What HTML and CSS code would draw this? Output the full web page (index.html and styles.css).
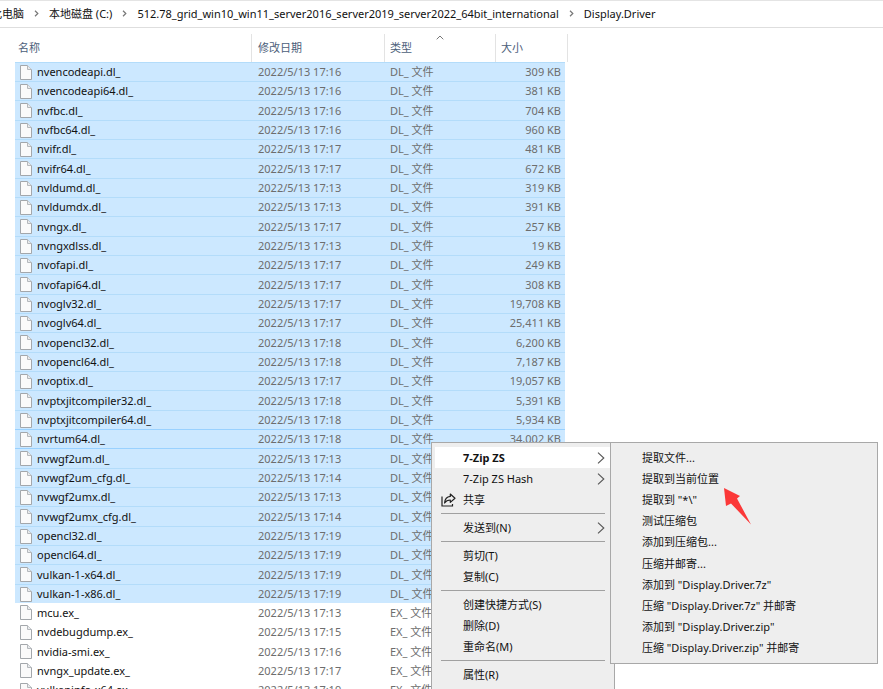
FILE: index.html
```html
<!DOCTYPE html>
<html lang="zh-CN">
<head>
<meta charset="utf-8">
<title>Display.Driver</title>
<link rel="stylesheet" href="styles.css">
</head>
<body>
<svg class="defs" aria-hidden="true">
  <symbol id="file" viewBox="0 0 12 15"><path d="M.5.5h7l4 4v10H.5z" fill="#fafafa" stroke="#a3a7ab"/><path d="M7.500.5v4h4" fill="#e9ebed" stroke="#b4b8bc"/></symbol>
  <symbol id="crumb" viewBox="0 0 5 7"><path d="M1 .8 3.800 3.500 1 6.200" fill="none" stroke="#777" stroke-width="1.200"/></symbol>
  <symbol id="more" viewBox="0 0 8 12"><path d="M1 .7 6.800 6 1 11.300" fill="none" stroke="#555" stroke-width="1.100"/></symbol>
</svg>
<div class="window">
  <nav class="address">
    <a href="#">此电脑</a>
    <svg class="crumb"><use href="#crumb"/></svg>
    <a href="#">本地磁盘 (C:)</a>
    <svg class="crumb"><use href="#crumb"/></svg>
    <a href="#">512.78_grid_win10_win11_server2016_server2019_server2022_64bit_international</a>
    <svg class="crumb"><use href="#crumb"/></svg>
    <a href="#">Display.Driver</a>
  </nav>
  <main class="list">
    <table>
      <colgroup><col class="c-name"><col class="c-date"><col class="c-type"><col class="c-size"><col class="c-end"></colgroup>
      <thead>
        <tr><th>名称</th><th>修改日期</th><th class="sorted">类型<svg class="caret" viewBox="0 0 8 5"><path d="M.7 4.300 4 1l3.300 3.300" fill="none" stroke="#777"/></svg></th><th colspan="2">大小</th></tr>
      </thead>
      <tbody id="files"></tbody>
    </table>
  </main>
</div>

<ul class="menu main-menu">
  <li class="open"><button type="button">7-Zip ZS</button><svg class="more"><use href="#more"/></svg></li>
  <li><button type="button">7-Zip ZS Hash</button><svg class="more"><use href="#more"/></svg></li>
  <li><svg class="share" viewBox="0 0 15 14"><path d="M1 3.500V13h10.500v-2" fill="none" stroke="#222" stroke-width="1.200"/><path d="M9.300 1 14 5.200 9.300 9.400V7C6.800 7 5 7.800 3.600 10 3.900 6.200 5.800 3.700 9.300 3.400z" fill="none" stroke="#222" stroke-width="1.200" stroke-linejoin="round"/></svg><button type="button">共享</button></li>
  <li class="rule"></li>
  <li><button type="button">发送到(N)</button><svg class="more"><use href="#more"/></svg></li>
  <li class="rule"></li>
  <li><button type="button">剪切(T)</button></li>
  <li><button type="button">复制(C)</button></li>
  <li class="rule"></li>
  <li><button type="button">创建快捷方式(S)</button></li>
  <li><button type="button">删除(D)</button></li>
  <li><button type="button">重命名(M)</button></li>
  <li class="rule"></li>
  <li><button type="button">属性(R)</button></li>
</ul>

<ul class="menu sub-menu">
  <li><button type="button">提取文件...</button></li>
  <li><button type="button">提取到当前位置</button></li>
  <li><button type="button">提取到 "*\"</button></li>
  <li><button type="button">测试压缩包</button></li>
  <li><button type="button">添加到压缩包...</button></li>
  <li><button type="button">压缩并邮寄...</button></li>
  <li><button type="button">添加到 "Display.Driver.7z"</button></li>
  <li><button type="button">压缩 "Display.Driver.7z" 并邮寄</button></li>
  <li><button type="button">添加到 "Display.Driver.zip"</button></li>
  <li><button type="button">压缩 "Display.Driver.zip" 并邮寄</button></li>
</ul>

<svg class="pointer" viewBox="0 0 28 37" aria-hidden="true"><path d="M0 0 16 8 13 10.500 27 36.500 7 15.500 2 18z" fill="#fb3838"/></svg>
<script src="files.js"></script>
</body>
</html>
```
FILE: styles.css
```css
* { box-sizing: border-box; }

body {
  margin: 0;
  background: #fff;
  color: #111;
  font: 11px/19px "Noto Sans", "Noto Sans CJK SC", sans-serif;
}

.defs { position: absolute; width: 0; height: 0; }

.window {
  display: flex;
  flex-direction: column;
  height: 100vh;
  overflow: hidden;
}

.address {
  display: flex;
  flex: none;
  align-items: center;
  gap: 10px;
  height: 28px;
  margin-left: -9px;
  padding-bottom: 2px;
  border-top: 1px solid #e4e4e4;
  border-bottom: 1px solid #dedede;
  white-space: nowrap;
}

.address a { color: #111; text-decoration: none; }
.crumb { flex: none; width: 5px; height: 7px; }

.list {
  flex: 1;
  min-height: 0;
  padding: 6px 0 0 15px;
  overflow: hidden;
}

table { width: 553px; border-collapse: separate; border-spacing: 0; table-layout: fixed; }
.c-name { width: 237px; }
.c-date { width: 133px; }
.c-type { width: 111px; }
.c-size { width: 69px; }
.c-end { width: 3px; }

th {
  height: 28px;
  padding: 0 0 2px 5px;
  border-right: 1px solid #e3e3e3;
  color: #4c607a;
  font-weight: 400;
  text-align: left;
}
th:first-child { padding-left: 3px; }
th:nth-child(2), td:nth-child(2) { padding-left: 6px; }
.sorted { position: relative; }
.caret { position: absolute; top: 1px; left: 51px; width: 8px; height: 5px; }

td {
  height: 19px;
  padding: 0 5px;
  color: #6d6d6d;
  line-height: 18px;
  white-space: nowrap;
}
tr:nth-child(3n) td { height: 20px; }
td:first-child { color: #111; }
td:last-child { padding-right: 4px; text-align: right; }
.selected td { background: #cce8ff; border-top: 1px solid #b3dcfa; }
.focused td, .focused + tr td { border-top-color: #99d1ff; }

.name { display: flex; align-items: center; gap: 5px; }
.name svg { flex: none; width: 12px; height: 15px; }

.menu {
  position: absolute;
  top: 442px;
  margin: 0;
  padding: 4px 3px;
  border: 1px solid #a8a8a8;
  background: #eee;
  list-style: none;
}
.menu li { position: relative; display: flex; align-items: center; height: 21px; }
.menu button {
  flex: 1;
  padding: 0 0 1px 28px;
  border: 0;
  background: none;
  color: #111;
  font: inherit;
  text-align: left;
}
.main-menu { left: 431px; width: 184px; }
.main-menu .rule { height: 7px; }
.rule::before { content: ""; flex: 1; height: 1px; margin: 0 6px; background: #a0a0a0; }
.main-menu .open { background: #fff; }
.menu .open button { font-weight: 700; }
.more { position: absolute; right: 6px; width: 8px; height: 12px; }
.share { position: absolute; left: 6px; width: 15px; height: 14px; }
.sub-menu { left: 610px; width: 268px; }
.sub-menu li:nth-child(5n) { height: 22px; }

.pointer { position: absolute; top: 488px; left: 724px; width: 28px; height: 37px; }
```
FILE: files.js
```js
const files = [
  ["nvencodeapi.dl_", "16", "309"],
  ["nvencodeapi64.dl_", "16", "381"],
  ["nvfbc.dl_", "16", "704"],
  ["nvfbc64.dl_", "16", "960"],
  ["nvifr.dl_", "17", "481"],
  ["nvifr64.dl_", "17", "672"],
  ["nvldumd.dl_", "13", "319"],
  ["nvldumdx.dl_", "13", "391"],
  ["nvngx.dl_", "17", "257"],
  ["nvngxdlss.dl_", "13", "19"],
  ["nvofapi.dl_", "17", "249"],
  ["nvofapi64.dl_", "17", "308"],
  ["nvoglv32.dl_", "17", "19,708"],
  ["nvoglv64.dl_", "17", "25,411"],
  ["nvopencl32.dl_", "18", "6,200"],
  ["nvopencl64.dl_", "18", "7,187"],
  ["nvoptix.dl_", "17", "19,057"],
  ["nvptxjitcompiler32.dl_", "18", "5,391"],
  ["nvptxjitcompiler64.dl_", "18", "5,934"],
  ["nvrtum64.dl_", "18", "34,002"],
  ["nvwgf2um.dl_", "13", ""],
  ["nvwgf2um_cfg.dl_", "14", ""],
  ["nvwgf2umx.dl_", "13", ""],
  ["nvwgf2umx_cfg.dl_", "14", ""],
  ["opencl32.dl_", "19", ""],
  ["opencl64.dl_", "19", ""],
  ["vulkan-1-x64.dl_", "19", ""],
  ["vulkan-1-x86.dl_", "19", ""],
  ["mcu.ex_", "13", ""],
  ["nvdebugdump.ex_", "15", ""],
  ["nvidia-smi.ex_", "16", ""],
  ["nvngx_update.ex_", "17", ""],
  ["vulkaninfo-x64.ex_", "19", ""]
];

document.getElementById("files").innerHTML = files.map(([name, minute, size]) => {
  const library = name.endsWith(".dl_");
  const state = (library ? "selected" : "") + (name === "nvrtum64.dl_" ? " focused" : "");
  return `<tr class="${state}"><td><div class="name"><svg><use href="#file"/></svg>${name}</div></td>` +
    `<td>2022/5/13 17:${minute}</td><td>${library ? "DL_" : "EX_"} 文件</td><td>${size && size + " KB"}</td></tr>`;
}).join("");
```
